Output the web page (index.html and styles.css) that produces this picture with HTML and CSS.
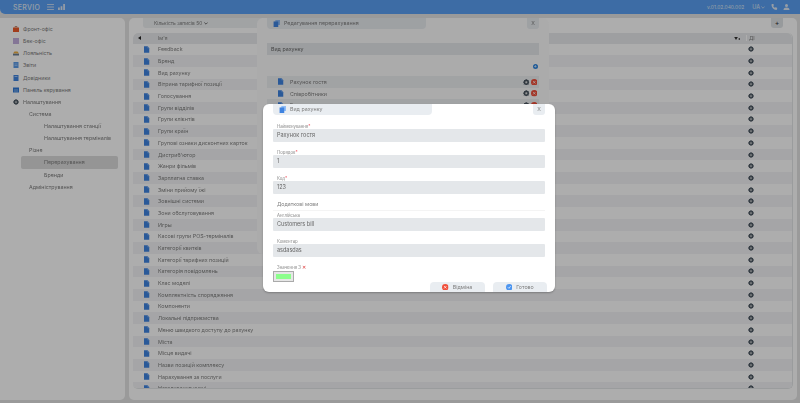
FILE: index.html
```html
<!DOCTYPE html>
<html lang="en">
<head>
    <meta charset="UTF-8">
    <title>Servio - Перерахування</title>
    <link rel="stylesheet" href="styles.css">
</head>
<body>
    <svg class="defs" width="0" height="0">
        <symbol id="doc" viewBox="0 0 10 12"><path d="M0 0h6.500l3.500 3.500v8.500h-10z" fill="#3f83e0"/><path d="M6.500 0l3.500 3.500h-3.500z" fill="#8fbcf5"/></symbol>
        <symbol id="docs" viewBox="0 0 12 12"><path d="M4 0h8v8.500h-8z" fill="#8fbcf5"/><path d="M1 2.500h8v9.500h-8z" fill="#3f83e0"/></symbol>
        <symbol id="gear" viewBox="0 0 12 12"><circle cx="6" cy="6" r="3.700" fill="none" stroke="#4a5560" stroke-width="2.600"/><path d="M6 .3v11.400M.3 6h11.400M2 2l8 8M10 2l-8 8" stroke="#4a5560" stroke-width="1.500"/><circle cx="6" cy="6" r="1.700" fill="#ddd"/></symbol>
        <symbol id="del" viewBox="0 0 12 12"><circle cx="6" cy="6" r="6" fill="#f0503c"/><path d="M3.800 3.800l4.400 4.400M8.200 3.800l-4.400 4.400" stroke="#fff" stroke-width="1.300"/></symbol>
        <symbol id="ok" viewBox="0 0 12 12"><circle cx="6" cy="6" r="6" fill="#4c95f0"/><path d="M3.500 6l2 2 3-4" stroke="#fff" stroke-width="1.300" fill="none"/></symbol>
        <symbol id="case" viewBox="0 0 6 6"><path d="M0 1.500h6v4.500h-6z" fill="#ee5a2a"/><path d="M2 1.500v-1h2v1" fill="none" stroke="#a5502a" stroke-width=".6"/></symbol>
        <symbol id="stack" viewBox="0 0 6 6"><path d="M1.500 1.500h3l1.500 2h-6z" fill="#f0b040"/><path d="M0 3.700h6v1.800h-6z" fill="#6c7f94"/></symbol>
        <symbol id="report" viewBox="0 0 6 6"><path d="M.5 0h5v6h-5z" fill="#5b9be8"/><path d="M1.500 2h3M1.500 3.500h3" stroke="#cfe2f8" stroke-width=".5"/></symbol>
        <symbol id="book" viewBox="0 0 6 6"><path d="M.5 0h5v6h-5z" fill="#3f83e0"/><path d="M1.500 1.500h3" stroke="#cfe2f8" stroke-width=".7"/></symbol>
        <symbol id="panel" viewBox="0 0 6 6"><path d="M0 .5h6v5h-6z" fill="#2f78d8"/><path d="M2 2v3.500M4 2v3.500" stroke="#cfe2f8" stroke-width=".6"/></symbol>
    </svg>

    <div class="page">
        <header class="topbar">
            <span class="logo">SERVIO</span>
            <svg class="bar-icon" viewBox="0 0 8 7"><path d="M0 .5h8M0 3.500h8M0 6.500h8" stroke="#dfe8f3" stroke-width="1"/></svg>
            <svg class="bar-icon" viewBox="0 0 8 7"><path d="M0 7V4h2v3zM3 7V2.500h2V7zM6 7V0h2v7z" fill="#dfe8f3"/></svg>
            <span class="spacer"></span>
            <span class="version">v.01.02.040.002</span>
            <span class="lang">UA</span>
            <svg class="chev" viewBox="0 0 6 4"><path d="M.5.500l2.500 2.500 2.500-2.500" stroke="#dfe8f3" fill="none"/></svg>
            <svg class="bar-icon phone" viewBox="0 0 8 8"><path d="M1 0l1.600 0 .6 2-1 .8c.4 1 1.100 1.800 2 2.300l1-.9L7.500 5v1.800C7.500 7.500 7 8 6.300 7.900 3 7.500.4 4.800 0 1.500 0 .7.400 0 1 0z" fill="#dfe8f3"/></svg>
            <svg class="bar-icon" viewBox="0 0 8 8"><circle cx="4" cy="2" r="2" fill="#dfe8f3"/><path d="M0 8c0-2.500 1.500-3.500 4-3.500S8 5.500 8 8z" fill="#dfe8f3"/></svg>
        </header>

        <div class="content">
            <nav class="sidebar">
                <a class="nav-item"><svg class="nav-icon"><use href="#case"/></svg>Фронт-офіс</a>
                <a class="nav-item"><i class="nav-icon violet"></i>Бек-офіс</a>
                <a class="nav-item"><svg class="nav-icon"><use href="#stack"/></svg>Лояльність</a>
                <a class="nav-item"><svg class="nav-icon"><use href="#report"/></svg>Звіти</a>
                <a class="nav-item"><svg class="nav-icon"><use href="#book"/></svg>Довідники</a>
                <a class="nav-item"><svg class="nav-icon"><use href="#panel"/></svg>Панель керування</a>
                <a class="nav-item"><svg class="nav-icon"><use href="#gear"/></svg>Налаштування</a>
                <a class="nav-item level-2">Система</a>
                <a class="nav-item level-3">Налаштування станції</a>
                <a class="nav-item level-3">Налаштування терміналів</a>
                <a class="nav-item level-2">Різне</a>
                <a class="nav-item level-3 active">Перерахування</a>
                <a class="nav-item level-3">Бренди</a>
                <a class="nav-item level-2">Адміністрування</a>
            </nav>

            <main class="main">
                <div class="main-top">
                    <div class="page-size">Кількість записів 50 <svg class="chev dark" viewBox="0 0 6 4"><path d="M.5.500l2.500 2.500 2.500-2.500" stroke="#333" fill="none"/></svg></div>
                    <div class="add-btn">+</div>
                </div>
                <div class="table">
                    <div class="table-head">
                        <span class="sort-arrow"></span>
                        <span class="col-name">Ім'я</span>
                        <span class="col-filter">▼◂</span>
                        <span class="col-action">ДІ</span>
                    </div>
                    <div class="rows">
                        <div class="row"><svg class="doc"><use href="#doc"/></svg><span class="row-name">Feedback</span><svg class="row-gear"><use href="#gear"/></svg></div>
                        <div class="row"><svg class="doc"><use href="#doc"/></svg><span class="row-name">Бренд</span><svg class="row-gear"><use href="#gear"/></svg></div>
                        <div class="row"><svg class="doc"><use href="#doc"/></svg><span class="row-name">Вид рахунку</span><svg class="row-gear"><use href="#gear"/></svg></div>
                        <div class="row"><svg class="doc"><use href="#doc"/></svg><span class="row-name">Вітрина тарифної позиції</span><svg class="row-gear"><use href="#gear"/></svg></div>
                        <div class="row"><svg class="doc"><use href="#doc"/></svg><span class="row-name">Голосування</span><svg class="row-gear"><use href="#gear"/></svg></div>
                        <div class="row"><svg class="doc"><use href="#doc"/></svg><span class="row-name">Групи відділів</span><svg class="row-gear"><use href="#gear"/></svg></div>
                        <div class="row"><svg class="doc"><use href="#doc"/></svg><span class="row-name">Групи клієнтів</span><svg class="row-gear"><use href="#gear"/></svg></div>
                        <div class="row"><svg class="doc"><use href="#doc"/></svg><span class="row-name">Групи країн</span><svg class="row-gear"><use href="#gear"/></svg></div>
                        <div class="row"><svg class="doc"><use href="#doc"/></svg><span class="row-name">Групові ознаки дисконтних карток</span><svg class="row-gear"><use href="#gear"/></svg></div>
                        <div class="row"><svg class="doc"><use href="#doc"/></svg><span class="row-name">Дистриб'ютор</span><svg class="row-gear"><use href="#gear"/></svg></div>
                        <div class="row"><svg class="doc"><use href="#doc"/></svg><span class="row-name">Жанри фільмів</span><svg class="row-gear"><use href="#gear"/></svg></div>
                        <div class="row"><svg class="doc"><use href="#doc"/></svg><span class="row-name">Зарплатна ставка</span><svg class="row-gear"><use href="#gear"/></svg></div>
                        <div class="row"><svg class="doc"><use href="#doc"/></svg><span class="row-name">Зміни прийому їжі</span><svg class="row-gear"><use href="#gear"/></svg></div>
                        <div class="row"><svg class="doc"><use href="#doc"/></svg><span class="row-name">Зовнішні системи</span><svg class="row-gear"><use href="#gear"/></svg></div>
                        <div class="row"><svg class="doc"><use href="#doc"/></svg><span class="row-name">Зони обслуговування</span><svg class="row-gear"><use href="#gear"/></svg></div>
                        <div class="row"><svg class="doc"><use href="#doc"/></svg><span class="row-name">Игры</span><svg class="row-gear"><use href="#gear"/></svg></div>
                        <div class="row"><svg class="doc"><use href="#doc"/></svg><span class="row-name">Касові групи POS-терміналів</span><svg class="row-gear"><use href="#gear"/></svg></div>
                        <div class="row"><svg class="doc"><use href="#doc"/></svg><span class="row-name">Категорії квитків</span><svg class="row-gear"><use href="#gear"/></svg></div>
                        <div class="row"><svg class="doc"><use href="#doc"/></svg><span class="row-name">Категорії тарифних позицій</span><svg class="row-gear"><use href="#gear"/></svg></div>
                        <div class="row"><svg class="doc"><use href="#doc"/></svg><span class="row-name">Категорія повідомлень</span><svg class="row-gear"><use href="#gear"/></svg></div>
                        <div class="row"><svg class="doc"><use href="#doc"/></svg><span class="row-name">Клас моделі</span><svg class="row-gear"><use href="#gear"/></svg></div>
                        <div class="row"><svg class="doc"><use href="#doc"/></svg><span class="row-name">Комплектність спорядження</span><svg class="row-gear"><use href="#gear"/></svg></div>
                        <div class="row"><svg class="doc"><use href="#doc"/></svg><span class="row-name">Компоненти</span><svg class="row-gear"><use href="#gear"/></svg></div>
                        <div class="row"><svg class="doc"><use href="#doc"/></svg><span class="row-name">Локальні підприємства</span><svg class="row-gear"><use href="#gear"/></svg></div>
                        <div class="row"><svg class="doc"><use href="#doc"/></svg><span class="row-name">Меню швидкого доступу до рахунку</span><svg class="row-gear"><use href="#gear"/></svg></div>
                        <div class="row"><svg class="doc"><use href="#doc"/></svg><span class="row-name">Міста</span><svg class="row-gear"><use href="#gear"/></svg></div>
                        <div class="row"><svg class="doc"><use href="#doc"/></svg><span class="row-name">Місце видачі</span><svg class="row-gear"><use href="#gear"/></svg></div>
                        <div class="row"><svg class="doc"><use href="#doc"/></svg><span class="row-name">Назви позицій комплексу</span><svg class="row-gear"><use href="#gear"/></svg></div>
                        <div class="row"><svg class="doc"><use href="#doc"/></svg><span class="row-name">Нарахування за послуги</span><svg class="row-gear"><use href="#gear"/></svg></div>
                        <div class="row"><svg class="doc"><use href="#doc"/></svg><span class="row-name">Нагадування кухні</span><svg class="row-gear"><use href="#gear"/></svg></div>
                    </div>
                </div>
            </main>
        </div>

        <!-- first dialog, sits under the dark layer -->
        <section class="modal modal-back">
            <div class="modal-head">
                <div class="modal-title"><svg class="title-icon"><use href="#docs"/></svg>Редагування перерахування</div>
                <div class="modal-close">X</div>
            </div>
            <div class="back-field">Вид рахунку</div>
            <div class="back-add"><span class="plus-dot">+</span></div>
            <div class="back-row shade"><svg class="doc"><use href="#doc"/></svg><span class="row-name">Рахунок гостя</span><svg class="mini"><use href="#gear"/></svg><svg class="mini"><use href="#del"/></svg></div>
            <div class="back-row"><svg class="doc"><use href="#doc"/></svg><span class="row-name">Співробітники</span><svg class="mini"><use href="#gear"/></svg><svg class="mini"><use href="#del"/></svg></div>
            <div class="back-row shade"><svg class="doc"><use href="#doc"/></svg><span class="row-name">Банкет</span><svg class="mini"><use href="#gear"/></svg><svg class="mini"><use href="#del"/></svg></div>
        </section>

        <div class="shade-layer"></div>

        <section class="modal modal-front">
            <div class="modal-head">
                <div class="modal-title"><svg class="title-icon"><use href="#docs"/></svg>Вид рахунку</div>
                <div class="modal-close">X</div>
            </div>
            <div class="form">
                <div class="field">
                    <label>Найменування<b>*</b></label>
                    <div class="input">Рахунок гостя</div>
                </div>
                <div class="field">
                    <label>Порядок<b>*</b></label>
                    <div class="input">1</div>
                </div>
                <div class="field">
                    <label>Код<b>*</b></label>
                    <div class="input">123</div>
                </div>
                <div class="section-title">Додаткові мови</div>
                <div class="field lang-field">
                    <label>Англійська</label>
                    <div class="input">Customers bill</div>
                </div>
                <div class="field">
                    <label>Коментар</label>
                    <div class="input">asdasdas</div>
                </div>
                <div class="color-field">
                    <label>Значення 3 <span class="clear-x">✕</span></label>
                    <div class="swatch"><i></i></div>
                </div>
            </div>
            <div class="actions">
                <div class="btn"><svg class="btn-icon"><use href="#del"/></svg>Відміна</div>
                <div class="btn"><svg class="btn-icon"><use href="#ok"/></svg>Готово</div>
            </div>
        </section>
    </div>
</body>
</html>
```

FILE: styles.css
```css
html, body {
    margin: 0;
    height: 100%;
    overflow: hidden;
}
body {
    font-family: 'Inter', 'Noto Sans', sans-serif;
    font-size: 5.3px;
    color: #7c7c7c;
    background-color: #e4e4e4;
}
.defs {
    position: absolute;
}
.page {
    position: relative;
    width: 800px;
    height: 403px;
    overflow: hidden;
    filter: blur(0.4px);
}

/* top bar */
.topbar {
    height: 14px;
    display: flex;
    align-items: center;
    padding: 0 10px 0 13px;
    gap: 4px;
    background-color: #5ba0f4;
    border-radius: 0 0 0 5px;
    color: #dfe8f3;
    box-sizing: border-box;
}
.logo {
    width: 30px;
    font-size: 7px;
    font-weight: 500;
    letter-spacing: 0.3px;
}
.bar-icon {
    width: 7px;
    height: 6px;
}
.spacer {
    flex: 1;
}
.version {
    font-size: 4.900px;
    margin-right: 4px;
}
.lang {
    font-size: 5.500px;
}
.chev {
    width: 4px;
    height: 3px;
    margin-left: -3px;
}
.chev.dark {
    margin-left: 1px;
}
.phone {
    margin-left: 2px;
    margin-right: 1px;
}

/* content */
.content {
    height: 389px;
    display: flex;
    gap: 4px;
    padding: 4px 3px 3px 0;
    box-sizing: border-box;
}
.sidebar {
    width: 125px;
    padding: 5px 0 0;
    background-color: #fff;
    border-radius: 0 5px 5px 0;
    box-sizing: border-box;
}
.nav-item {
    height: 12.130px;
    display: flex;
    align-items: center;
    padding-left: 23px;
    box-sizing: border-box;
}
.nav-icon {
    width: 6px;
    height: 6px;
    margin: 0 4px 0 -10px;
    flex-shrink: 0;
}
.violet {
    background-color: #c3aede;
}
.level-2 {
    padding-left: 29px;
}
.level-3 {
    padding-left: 44px;
}
.active {
    margin: 0 7px 0 21px;
    padding-left: 23px;
    background-color: #dcdcdc;
    border-radius: 2px;
}

.main {
    flex: 1;
    display: flex;
    flex-direction: column;
    padding: 0 4px;
    background-color: #fff;
    border-radius: 5px;
}
.main-top {
    height: 15px;
    display: flex;
    justify-content: space-between;
    align-items: flex-start;
    padding: 0 10px;
    flex-shrink: 0;
}
.page-size {
    width: 119px;
    height: 10px;
    padding-left: 11px;
    display: flex;
    align-items: center;
    font-size: 4.900px;
    gap: 1px;
    background-color: #edf0f2;
    border-radius: 0 0 3px 3px;
    box-sizing: border-box;
}
.add-btn {
    width: 12px;
    height: 10px;
    text-align: center;
    line-height: 10px;
    font-size: 7px;
    color: #333;
    background-color: #dfe3e6;
    border-radius: 0 0 3px 3px;
}
.table {
    height: 355px;
    border-right: 1px solid #e4e6e8;
    border-bottom: 1px solid #e4e6e8;
    border-radius: 5px;
    overflow: hidden;
}
.table-head {
    height: 10.500px;
    display: flex;
    align-items: center;
    background-color: #e9ebed;
    border-radius: 5px 5px 0 0;
}
.sort-arrow {
    width: 0;
    height: 0;
    margin-left: 5px;
    border-style: solid;
    border-width: 2px 3px 2px 0;
    border-color: transparent #222 transparent transparent;
}
.col-name {
    margin-left: 17px;
    font-size: 5px;
    flex: 1;
}
.col-filter {
    width: 8px;
    color: #333;
    font-size: 4px;
    margin-right: 4px;
}
.col-action {
    width: 46px;
    padding-left: 2px;
    border-left: 1px solid #fff;
    box-sizing: border-box;
}
.rows {
    height: 345px;
}
.row {
    height: 11.700px;
    display: flex;
    align-items: center;
}
.row:nth-child(even) {
    background-color: #f3f4f6;
}
.doc {
    width: 5.500px;
    height: 7px;
    margin-left: 11px;
    flex-shrink: 0;
}
.row-name {
    margin-left: 8.500px;
    flex: 1;
}
.row-gear {
    width: 6px;
    height: 6px;
    margin-right: 38px;
}

/* dialogs */
.modal {
    position: absolute;
    box-sizing: border-box;
    background-color: #fff;
    border-radius: 6px;
}
.modal-back {
    left: 257px;
    top: 18px;
    width: 292px;
    height: 236px;
    padding: 0 10px;
    background-color: #fdfdfd;
}
.shade-layer {
    position: absolute;
    inset: 0;
    background-color: rgba(0, 0, 0, 0.32);
}
.modal-front {
    left: 263px;
    top: 104px;
    width: 292px;
    height: 188px;
    padding: 0 10px;
    box-shadow: 0 1px 2px rgba(0, 0, 0, 0.25);
}
.modal-head {
    height: 11px;
    display: flex;
    justify-content: space-between;
}
.modal-title {
    width: 159px;
    height: 10.500px;
    display: flex;
    align-items: center;
    padding-left: 6px;
    box-sizing: border-box;
    background-color: #e9edf1;
    border-radius: 0 0 4px 4px;
}
.title-icon {
    width: 7px;
    height: 7px;
    margin-right: 4px;
}
.modal-close {
    width: 12px;
    height: 10.500px;
    text-align: center;
    line-height: 11px;
    background-color: #e9edf1;
    border-radius: 0 0 3px 3px;
}
.back-field {
    margin: 14px 0 0;
    height: 12px;
    padding-left: 4px;
    line-height: 12px;
    color: #666;
    background-color: #e6e9ec;
}
.back-add {
    display: flex;
    justify-content: flex-end;
    height: 21px;
    padding-top: 8.500px;
    box-sizing: border-box;
}
.plus-dot {
    width: 5.500px;
    height: 5.500px;
    margin-right: 1px;
    border-radius: 50%;
    text-align: center;
    line-height: 5.500px;
    color: #fff;
    background-color: #2f86e0;
}
.back-row {
    height: 11.700px;
    display: flex;
    align-items: center;
    gap: 1px;
    padding-right: 2px;
}
.back-row .row-name {
    margin-left: 5.500px;
}
.shade {
    background-color: #eef0f2;
}
.mini {
    width: 6.500px;
    height: 6.500px;
}
.form {
    display: flex;
    flex-direction: column;
}
.field {
    margin-top: 8px;
    display: flex;
    flex-direction: column;
}
.field:first-child {
    margin-top: 9px;
}
.field label,
.color-field label {
    height: 5px;
    padding-left: 4px;
    font-size: 4.300px;
    line-height: 5px;
    color: #888;
}
.field label b {
    color: #e23;
    font-weight: 400;
}
.input {
    height: 13px;
    padding-left: 4px;
    line-height: 13px;
    font-size: 5.500px;
    color: #666;
    background-color: #e4e7ea;
    border-radius: 1px;
}
.section-title {
    margin-top: 7px;
    height: 9px;
    padding-left: 4px;
    line-height: 7px;
    border-bottom: 1px solid #f4f4f4;
}
.lang-field {
    margin-top: 2px;
}
.color-field {
    margin-top: 7px;
}
.clear-x {
    color: #d33;
    font-size: 5px;
}
.swatch {
    width: 21px;
    height: 11px;
    margin-top: 1px;
    padding: 2px;
    border: 1px solid #aaa;
    background-color: #e6e6e6;
    box-sizing: border-box;
}
.swatch i {
    display: block;
    height: 100%;
    background-color: #8cff8c;
}
.actions {
    position: absolute;
    right: 8px;
    bottom: 0;
    display: flex;
    gap: 8px;
}
.btn {
    width: 54.500px;
    height: 10px;
    display: flex;
    justify-content: center;
    align-items: center;
    gap: 4px;
    background-color: #e9edf1;
    border-radius: 4px 4px 0 0;
}
.btn-icon {
    width: 6.500px;
    height: 6.500px;
}
```
